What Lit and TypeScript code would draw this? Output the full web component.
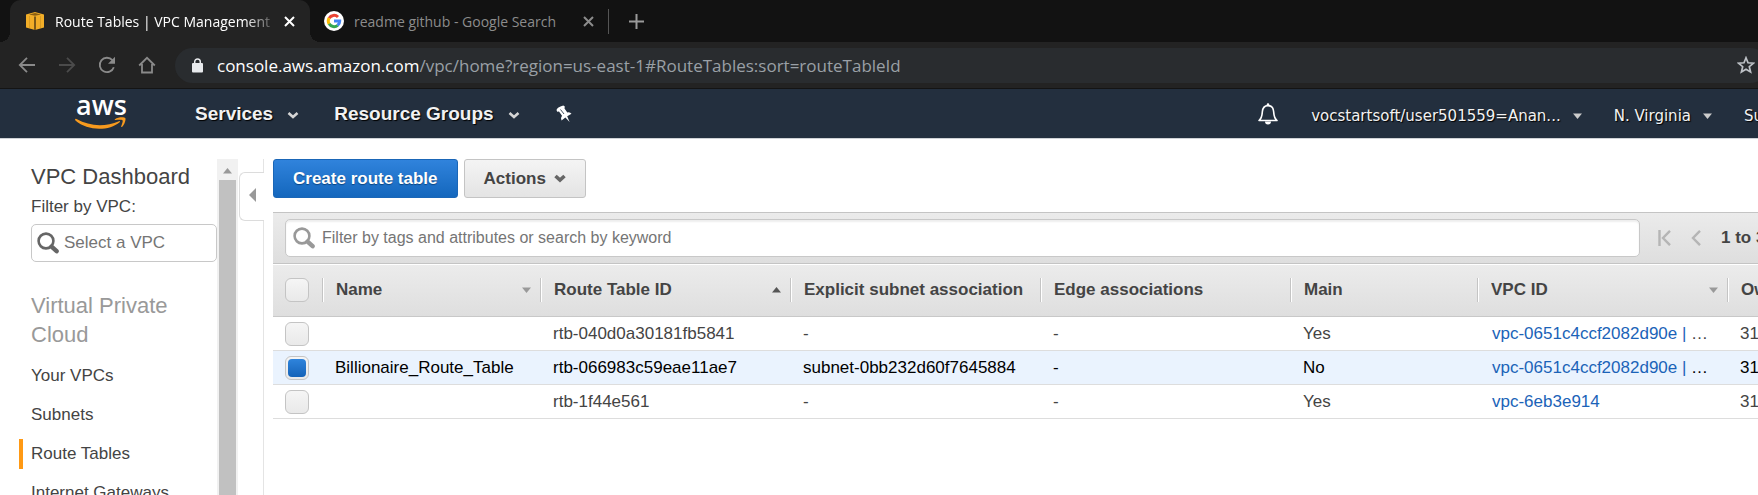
import { LitElement, html, css, svg, nothing } from "lit";
import { customElement, state } from "lit/decorators.js";

const caret = (cls = "") => svg`<svg class="caret ${cls}" width="9" height="6" viewBox="0 0 9 6" aria-hidden="true"><path d="M0 0.5h9L4.5 6z" fill="currentColor"/></svg>`;

const chevron = (weight: number) => svg`<svg width="12" height="9" viewBox="0 0 12 9" fill="none" aria-hidden="true"><path d="M1.500 2L6 6l4.500-4" stroke="currentColor" stroke-width=${weight}/></svg>`;

const magnifier = (color: string) => svg`<svg class="magnifier" width="22" height="22" viewBox="0 0 22 22" fill="none" stroke=${color} aria-hidden="true"><circle cx="9" cy="9" r="7.400" stroke-width="2.600"/><path d="M14.600 14.600l5 4.600" stroke-width="4.400" stroke-linecap="round"/></svg>`;

const closeIcon = svg`<svg width="11" height="11" viewBox="0 0 11 11" aria-hidden="true"><path d="M1 1l9 9M10 1l-9 9" stroke="currentColor" stroke-width="2"/></svg>`;

@customElement("browser-bar")
export class BrowserBar extends LitElement {
  static styles = css`
    :host { display: block; background: #232323; border-bottom: 1px solid #141414; font-family: "Open Sans", "Noto Sans", sans-serif; overflow: hidden; }
    button { border: 0; padding: 0; background: none; color: inherit; font: inherit; display: flex; align-items: center; justify-content: center; }
    .strip { display: flex; align-items: center; height: 42px; padding-left: 10px; background: #121212; color: #8c8c8c; font-size: 14px; }
    .tab { display: flex; align-items: center; height: 42px; box-sizing: border-box; }
    .active { position: relative; width: 300px; padding: 0 15px 0 16px; gap: 11px; background: #232323; color: #fff; border-radius: 11px 11px 0 0; }
    .active::before, .active::after { content: ""; position: absolute; bottom: 0; width: 10px; height: 10px; }
    .active::before { left: -10px; background: radial-gradient(circle at 0 0, transparent 10px, #232323 10px); }
    .active::after { right: -10px; background: radial-gradient(circle at 100% 0, transparent 10px, #232323 10px); }
    .title { flex: 1; white-space: nowrap; overflow: hidden; }
    .active .title { mask-image: linear-gradient(to right, #000 190px, transparent 224px); }
    .second { width: 298px; padding: 0 14px; gap: 10px; }
    .divider { width: 1px; height: 25px; background: #555; }
    .plus { width: 54px; height: 28px; }
    .tools { display: flex; align-items: center; height: 46px; padding-left: 18px; color: #8a8a8a; }
    .nav { width: 18px; height: 24px; margin-right: 22px; }
    .dim { color: #4b4b4b; }
    .omnibox { flex: 1; display: flex; align-items: center; gap: 14px; height: 35px; margin: 0 -10px 0 -3px; padding: 0 13px 0 17px; border-radius: 18px; background: #292c2f; font-size: 17px; color: #9aa0a6; white-space: nowrap; }
    .url { flex: 1; overflow: hidden; }
    .domain { color: #fff; }
    .star { color: #bdc1c6; }
  `;
  render() {
    return html`
      <div class="strip">
        <div class="tab active">
          <svg width="18" height="18" viewBox="0 0 18 18" aria-hidden="true">
            <path d="M0 2.600L9 0l9 2.600v12.800L9 18l-9-2.600z" fill="#f2ae28"/>
            <path d="M3 2.600L9 1l6 1.600-6 1.200z" fill="#8a5f12"/>
            <path d="M8 4.500h2V18H8z" fill="#7d5a18"/>
            <path d="M3.500 4v12M14.500 4v12" stroke="#cf9220" stroke-width="0.700"/>
          </svg>
          <span class="title">Route Tables | VPC Management</span>
          <button aria-label="Close tab">${closeIcon}</button>
        </div>
        <div class="tab second">
          <svg width="20" height="20" viewBox="0 0 20 20" aria-hidden="true">
            <circle cx="10" cy="10" r="10" fill="#fff"/>
            <g fill="none" stroke-width="3">
              <path d="M5.100 7.200A5.700 5.700 0 0 1 14 6" stroke="#ea4335"/>
              <path d="M5.100 7.100A5.700 5.700 0 0 0 5.100 12.900" stroke="#fbbc05"/>
              <path d="M5.100 12.800A5.700 5.700 0 0 0 13.700 14.300" stroke="#34a853"/>
              <path d="M13.600 14.400A5.700 5.700 0 0 0 15.700 10.100H10" stroke="#4285f4"/>
            </g>
          </svg>
          <span class="title">readme github - Google Search</span>
          <button aria-label="Close tab">${closeIcon}</button>
        </div>
        <div class="divider"></div>
        <button class="plus" aria-label="New tab"><svg width="15" height="15" viewBox="0 0 15 15"><path d="M7.500 0v15M0 7.500h15" stroke="#9a9a9a" stroke-width="2"/></svg></button>
      </div>
      <div class="tools">
        <button class="nav" aria-label="Back"><svg width="18" height="18" viewBox="0 0 18 18" fill="none" stroke="currentColor" stroke-width="1.800"><path d="M17 9H2M9 1.800L1.800 9 9 16.200"/></svg></button>
        <button class="nav dim" aria-label="Forward"><svg width="18" height="18" viewBox="0 0 18 18" fill="none" stroke="currentColor" stroke-width="1.800"><path d="M1 9h15M9 1.800L16.200 9 9 16.200"/></svg></button>
        <button class="nav" aria-label="Reload"><svg width="18" height="18" viewBox="0 0 18 18"><path d="M15.800 11.200A7.200 7.200 0 1 1 14.400 4.200" fill="none" stroke="currentColor" stroke-width="1.800"/><path d="M17 0.800v7h-7z" fill="currentColor"/></svg></button>
        <button class="nav" aria-label="Home"><svg width="18" height="18" viewBox="0 0 18 18" fill="none" stroke="currentColor" stroke-width="1.800"><path d="M1.200 9.500L9 1.800l7.800 7.700M4 8v8.500h10V8"/></svg></button>
        <div class="omnibox">
          <svg width="11" height="15" viewBox="0 0 11 15" aria-hidden="true"><rect y="5" width="11" height="9.500" rx="1" fill="#e8eaed"/><path d="M2.700 5.500V3.800a2.800 2.800 0 0 1 5.600 0v1.700" fill="none" stroke="#e8eaed" stroke-width="1.500"/></svg>
          <span class="url"><span class="domain">console.aws.amazon.com</span>/vpc/home?region=us-east-1#RouteTables:sort=routeTableId</span>
          <button class="star" aria-label="Bookmark this page"><svg width="18" height="18" viewBox="0 0 18 18"><path d="M9 1.800l2 5 5.400.4-4.100 3.500 1.300 5.300L9 13.200 4.400 16l1.300-5.300-4.100-3.500L7 6.800z" fill="none" stroke="currentColor" stroke-width="1.700"/></svg></button>
        </div>
      </div>`;
  }
}

@customElement("aws-header")
export class AwsHeader extends LitElement {
  static styles = css`
    :host { display: flex; align-items: center; height: 49px; background: #232f3e; border-bottom: 1px solid #cfd2d6; overflow: hidden; color: #f2f2f2; }
    button { border: 0; padding: 0; background: none; color: inherit; display: flex; align-items: center; text-shadow: 1px 1px 1px #000; white-space: nowrap; }
    .logo { display: flex; margin: 0 67px 0 74px; }
    .mark { font: 600 27px "Open Sans", sans-serif; fill: #fff; }
    .menu { gap: 14px; margin-right: 35px; font: bold 19px "Liberation Sans", Arial, sans-serif; }
    .menu svg { margin-top: 4px; color: #d5d5d5; }
    .right { display: flex; align-items: center; margin-left: auto; padding-top: 4px; font: 15px "DejaVu Sans", Verdana, sans-serif; }
    .right button { font: inherit; }
    .bell { margin: -4px 33px 0 0; }
    .drop { gap: 12px; margin-right: 32px; }
    .drop .caret { color: #ccc; }
    .support { width: 14px; overflow: hidden; }
  `;
  render() {
    return html`
      <a class="logo" href="#" aria-label="AWS home">
        <svg width="54" height="48" viewBox="0 -6 54 48">
          <text class="mark" x="2" y="19">aws</text>
          <path d="M1 23.300q.6-.8 1.500-.2C16 30.500 31 31 45 25.200q1.600-.4.700 1C35 35.200 14 35.400 1.400 24.600z" fill="#f79a1e"/>
          <path d="M41 23.200c3-2.400 9.500-2.400 10.300-1.200.8 1.500-.6 6.500-3.300 8.900-.8.5-1 0-.8-.5.700-1.800 2-5.200 1.300-6.100-.8-.9-4.600-.6-6.900-.3-.9.100-1.200-.3-.6-.8z" fill="#f79a1e"/>
        </svg>
      </a>
      <button class="menu">Services ${chevron(2.6)}</button>
      <button class="menu">Resource Groups ${chevron(2.6)}</button>
      <button aria-label="Pin shortcuts"><svg width="18" height="18" viewBox="0 0 18 18"><path d="M1.500 5Q2 2.500 8.300.6l1.500 1-.3 1.800 2.800 4q2.600-.9 4.200 1.300l-4.300 2.600 2.400 5.700-4.200-4.500-3.900 2.900q-1.300-2.400.5-4.700l-3-4.300-1.800.3z" fill="#fff"/><path d="M5.500 4.500L9 9" stroke="#4a5563" stroke-width="1"/></svg></button>
      <div class="right">
        <button class="bell" aria-label="Notifications"><svg width="20" height="22" viewBox="0 0 20 22"><path d="M1 17.500c3-2.500 3-4.500 3.300-8.500C4.600 4.800 6.700 2.600 10 2.600s5.400 2.200 5.700 6.400c.3 4 .3 6 3.300 8.500z" fill="none" stroke="#fff" stroke-width="1.600" stroke-linejoin="round"/><path d="M8.700 2.500V1.500a1.300 1.300 0 0 1 2.600 0v1zM7 18.500h6a3 3 0 0 1-6 0z" fill="#fff"/></svg></button>
        <button class="drop">vocstartsoft/user501559=Anan... ${caret()}</button>
        <button class="drop">N. Virginia ${caret()}</button>
        <button class="support">Support</button>
      </div>`;
  }
}

@customElement("vpc-sidebar")
export class VpcSidebar extends LitElement {
  static styles = css`
    :host { display: flex; flex: none; padding-top: 20px; font: 17px "Liberation Sans", Arial, sans-serif; color: #444; }
    .content { width: 217px; box-sizing: border-box; padding-left: 31px; overflow: hidden; }
    .dashboard { display: block; margin: 2px 0 0; font-size: 22px; line-height: 32px; color: inherit; text-decoration: none; }
    .filter-label { display: block; line-height: 28px; }
    .picker { display: flex; align-items: center; gap: 5px; height: 38px; margin-top: 3px; padding: 0 5px; box-sizing: border-box; border: 1px solid #c8c8c8; border-radius: 5px; }
    .picker svg { flex: none; }
    input { flex: 1; min-width: 0; padding: 0; border: 0; outline: 0; background: none; font: inherit; color: #444; }
    input::placeholder { color: #757575; }
    h2 { margin: 29px 0 7px; font-size: 22px; line-height: 29px; font-weight: normal; color: #999; }
    .link { display: flex; align-items: center; height: 39px; margin-left: -12px; color: #444; text-decoration: none; }
    .link::before { content: ""; width: 4px; height: 30px; margin-right: 8px; }
    .current::before { background: #ff9914; }
    .scroll { display: flex; flex-direction: column; width: 21px; background: #f1f1f1; }
    .arrow { display: grid; place-items: center; height: 21px; padding-top: 2px; box-sizing: border-box; color: #999; }
    .arrow svg { transform: rotate(180deg); }
    .thumb { flex: 1; margin: 0 2px; background: #c1c1c1; }
    .edge { display: flex; flex-direction: column; width: 26px; padding-left: 1px; box-sizing: border-box; }
    .line { border-right: 1px solid #e4e4e4; }
    .above { height: 13px; }
    .below { flex: 1; }
    .collapse { height: 49px; padding: 0 0 0 9px; border: 1px solid #dcdcdc; border-right: 0; border-radius: 6px 0 0 6px; background: #fff; text-align: left; }
  `;
  render() {
    return html`
      <div class="content">
        <a class="dashboard" href="#">VPC Dashboard</a>
        <label class="filter-label" for="vpc">Filter by VPC:</label>
        <div class="picker">${magnifier("#666")}<input id="vpc" placeholder="Select a VPC"></div>
        <h2>Virtual Private Cloud</h2>
        <nav>
          ${["Your VPCs", "Subnets", "Route Tables", "Internet Gateways"].map(
            (name) => html`<a class="link ${name === "Route Tables" ? "current" : ""}" href="#">${name}</a>`)}
        </nav>
      </div>
      <div class="scroll"><div class="arrow">${caret()}</div><div class="thumb"></div></div>
      <div class="edge">
        <div class="line above"></div>
        <button class="collapse" aria-label="Collapse navigation"><svg width="7" height="14" viewBox="0 0 7 14"><path d="M7 0v14L0 7z" fill="#999"/></svg></button>
        <div class="line below"></div>
      </div>`;
  }
}

interface Row { name: string; id: string; subnet: string; edge: string; main: string; vpc: string; more: boolean; owner: string; }

const ROWS: Row[] = [
  { name: "", id: "rtb-040d0a30181fb5841", subnet: "-", edge: "-", main: "Yes", vpc: "vpc-0651c4ccf2082d90e |", more: true, owner: "31" },
  { name: "Billionaire_Route_Table", id: "rtb-066983c59eae11ae7", subnet: "subnet-0bb232d60f7645884", edge: "-", main: "No", vpc: "vpc-0651c4ccf2082d90e |", more: true, owner: "31" },
  { name: "", id: "rtb-1f44e561", subnet: "-", edge: "-", main: "Yes", vpc: "vpc-6eb3e914", more: false, owner: "31" },
];

const COLUMNS = [
  { label: "Name", sort: "down", cls: "c-name" },
  { label: "Route Table ID", sort: "up", cls: "c-wide" },
  { label: "Explicit subnet associations", sort: "", cls: "c-wide" },
  { label: "Edge associations", sort: "", cls: "c-wide" },
  { label: "Main", sort: "", cls: "c-main" },
  { label: "VPC ID", sort: "down", cls: "c-wide" },
  { label: "Owner", sort: "", cls: "c-owner" },
];

@customElement("route-tables")
export class RouteTables extends LitElement {
  @state() private selected = 1;

  static styles = css`
    :host { display: block; flex: 1; min-width: 0; padding: 20px 0 0 9px; overflow: hidden; font: 17px "Liberation Sans", Arial, sans-serif; color: #444; }
    .actions { display: flex; gap: 6px; margin-bottom: 14px; }
    .btn { display: flex; align-items: center; gap: 8px; height: 39px; padding: 0 19px; border-radius: 3px; font: bold 17px "Liberation Sans", Arial, sans-serif; }
    .primary { color: #fff; border: 1px solid #1a66b7; background: linear-gradient(#3083dc, #1467bd); text-shadow: 0 1px 1px #0a4480; }
    .plain { color: #444; border: 1px solid #c4c4c4; background: linear-gradient(#f4f4f4, #e4e4e4); }
    .plain svg { color: #666; }
    .bar { display: flex; align-items: center; height: 50px; padding-left: 12px; border-top: 1px solid #c4c4c4; border-bottom: 1px solid #c4c4c4; background: linear-gradient(#ebebeb, #dedede); }
    .search { flex: 1; display: flex; align-items: center; gap: 7px; height: 38px; padding: 0 8px 0 7px; box-sizing: border-box; border: 1px solid #c8c8c8; border-radius: 5px; background: #fff; box-shadow: inset 0 2px 2px #eee; }
    .search input { flex: 1; padding: 0; border: 0; outline: 0; background: none; font: 16px "Liberation Sans", Arial, sans-serif; color: #444; }
    .search input::placeholder { color: #757575; }
    .pager { display: flex; align-items: center; flex: none; gap: 20px; width: 100px; margin-left: 18px; overflow: hidden; font-weight: bold; white-space: nowrap; }
    .pager button { display: flex; flex: none; padding: 0; border: 0; background: none; }
    table { width: 100%; min-width: 1485px; table-layout: fixed; border-collapse: separate; border-spacing: 0; }
    th, td { box-sizing: border-box; }
    .c-check { width: 49px; }
    .c-name { width: 218px; }
    .c-wide { width: 250px; }
    .c-main { width: 187px; }
    thead tr { background: linear-gradient(#ececec, #dedede); }
    th { height: 53px; padding: 0; border-bottom: 1px solid #c8c8c8; box-shadow: inset 0 1px #fff; font-weight: bold; text-align: left; }
    .head { display: flex; align-items: center; height: 24px; padding: 0 9px 0 13px; border-left: 1px solid #c4c4c4; box-shadow: inset 1px 0 #fff; }
    .label { flex: 1; margin-right: 8px; overflow: hidden; white-space: nowrap; line-height: 24px; }
    .c-owner .head { padding-right: 0; }
    .c-owner .label { margin-right: 0; }
    .caret { flex: none; color: #999; }
    .up { color: #555; transform: rotate(180deg); }
    td { height: 34px; padding: 0 0 0 13px; border-bottom: 1px solid #ddd; white-space: nowrap; overflow: hidden; }
    td.check, th.check { padding: 0 0 0 12px; }
    .vpc { padding-left: 15px; }
    .on td { background: #eaf3fe; color: #000; }
    td a { color: #1b63b8; text-decoration: none; }
    .tick { appearance: none; display: grid; place-items: center; box-sizing: border-box; width: 24px; height: 24px; margin: 0; border: 1px solid #c4c4c4; border-radius: 6px; background: linear-gradient(#f5f5f5, #e9e9e9); }
    .tick:checked::before { content: ""; width: 18px; height: 18px; border-radius: 4px; background: linear-gradient(#2f84dc, #1563b8); }
  `;

  render() {
    return html`
      <div class="actions">
        <button class="btn primary">Create route table</button>
        <button class="btn plain">Actions ${chevron(3.6)}</button>
      </div>
      <div class="bar">
        <div class="search">${magnifier("#999")}<input aria-label="Filter" placeholder="Filter by tags and attributes or search by keyword"></div>
        <div class="pager">
          <button aria-label="First page"><svg width="13" height="16" viewBox="0 0 13 16" fill="none" stroke="#b5b5b5" stroke-width="2.400"><path d="M1.500 0v16M12 .8L5 8l7 7.200"/></svg></button>
          <button aria-label="Previous page"><svg width="10" height="16" viewBox="0 0 10 16" fill="none" stroke="#b5b5b5" stroke-width="2.400"><path d="M9 .8L2 8l7 7.200"/></svg></button>
          <span>1 to 3</span>
        </div>
      </div>
      <table>
        <thead>
          <tr>
            <th class="check c-check"><input class="tick" type="checkbox" aria-label="Select all"></th>
            ${COLUMNS.map((c) => html`<th class=${c.cls}><div class="head"><span class="label">${c.label}</span>${c.sort ? caret(c.sort) : nothing}</div></th>`)}
          </tr>
        </thead>
        <tbody>
          ${ROWS.map((r, i) => html`
            <tr class=${i === this.selected ? "on" : ""}>
              <td class="check"><input class="tick" type="checkbox" aria-label="Select ${r.id}" .checked=${i === this.selected} @change=${() => (this.selected = i)}></td>
              <td>${r.name}</td><td>${r.id}</td><td>${r.subnet}</td><td>${r.edge}</td><td>${r.main}</td>
              <td class="vpc"><a href="#">${r.vpc}</a>${r.more ? " …" : nothing}</td>
              <td>${r.owner}</td>
            </tr>`)}
        </tbody>
      </table>`;
  }
}

@customElement("app-root")
export class AppRoot extends LitElement {
  static styles = css`
    :host { display: flex; flex-direction: column; height: 100vh; overflow: hidden; background: #fff; }
    browser-bar, aws-header { flex: none; }
    .body { display: flex; flex: 1; min-height: 0; }
  `;
  render() {
    return html`
      <browser-bar></browser-bar>
      <aws-header></aws-header>
      <div class="body"><vpc-sidebar></vpc-sidebar><route-tables></route-tables></div>`;
  }
}
